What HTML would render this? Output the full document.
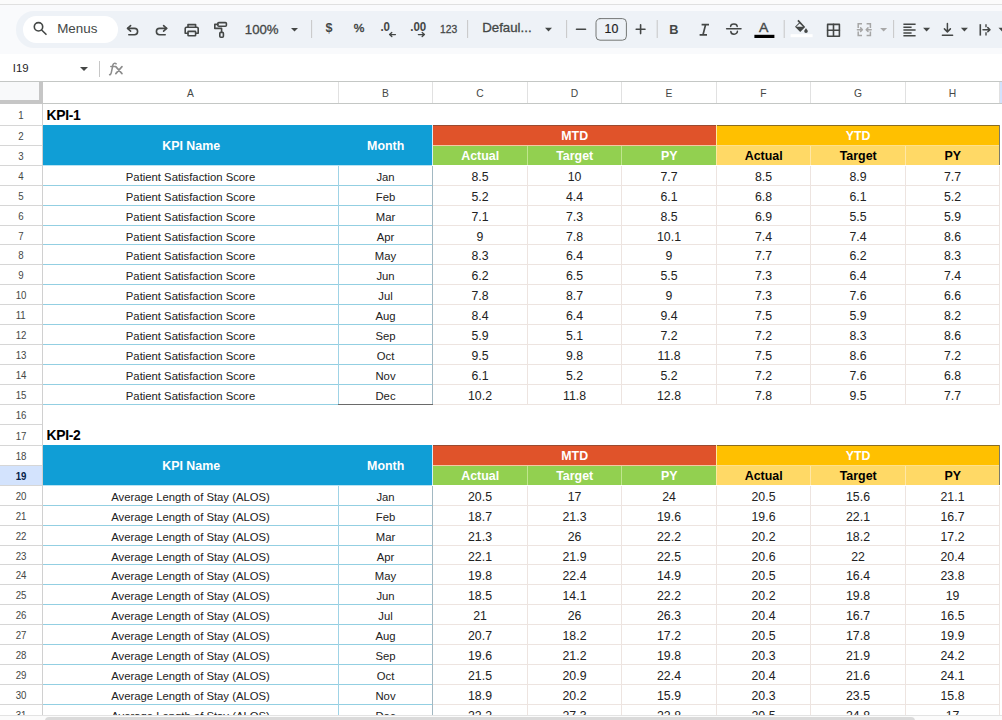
<!DOCTYPE html>
<html><head><meta charset="utf-8"><style>
html,body{margin:0;padding:0;width:1002px;height:720px;overflow:hidden;background:#fff;font-family:"Liberation Sans",sans-serif;}
#root{position:relative;width:1002px;height:720px;overflow:hidden}
#root div{position:absolute;box-sizing:border-box}
#root .t{white-space:nowrap;overflow:hidden;font-size:11.2px;color:#222}
</style></head><body><div id="root">
<div style="left:0;top:0;width:1002px;height:4px;background:#fbfbfb"></div>
<div style="left:0;top:4px;width:1002px;height:1px;background:#e0e0e0"></div>
<div style="left:0;top:5px;width:1002px;height:49px;background:#f9fafc"></div>
<div style="left:16px;top:11px;width:1040px;height:36.5px;background:#eef2f7;border-radius:18px"></div>
<div style="left:22.5px;top:16px;width:95px;height:26.5px;background:#fff;border-radius:13.25px"></div>
<svg style="position:absolute;left:0;top:0" width="1002" height="55" viewBox="0 0 1002 55">
<g fill="none" stroke="#444746" stroke-width="1.6" stroke-linecap="round" stroke-linejoin="round">
<circle cx="38.5" cy="26.8" r="4.2"/><path d="M41.9 30.3 L46 34.3"/>
<path d="M127.6 28.4 H134.4 A3.2 3.2 0 0 1 134.4 34.8 H128.8"/><path d="M130.6 25.6 L127.6 28.4 L130.6 31.2"/>
<path d="M166.6 28.4 H159.6 A3.2 3.2 0 0 0 159.6 34.8 H165.2"/><path d="M163.6 25.6 L166.6 28.4 L163.6 31.2"/>
<path d="M188 27 V24.6 H195.6 V27"/>
<path d="M187.8 33.2 H185.2 V28.6 A1.4 1.4 0 0 1 186.6 27.2 H196.8 A1.4 1.4 0 0 1 198.2 28.6 V33.2 H195.8"/>
<rect x="188" y="31.4" width="7.6" height="4.4" rx="0.6"/>
<rect x="217.8" y="22.6" width="8.6" height="3.6" rx="1"/>
<path d="M217.8 24.4 H214.8 V28.4 H221.6 V32.2"/>
<rect x="219.8" y="32.4" width="3.6" height="4.8" rx="1"/>
<path d="M395.4 34.6 H389.6 M391.8 32.6 L389.6 34.6 L391.8 36.6" stroke-width="1.4"/>
<path d="M418.4 34.6 H424.4 M422.2 32.6 L424.4 34.6 L422.2 36.6" stroke-width="1.4"/>
<path d="M576.5 29.2 H585.5"/>
<path d="M636.2 29.2 H645 M640.6 24.8 V33.6"/>
<rect x="596" y="18.6" width="30.4" height="21.6" rx="4" stroke="#747775" stroke-width="1"/>
<path d="M701.6 24.6 H709 M699.6 34.8 H707 M705.6 24.6 L703 34.8" stroke-width="1.7" stroke-linecap="butt"/>
<path d="M726.6 28.8 H741" stroke-width="1.5"/>
<path d="M730.6 26.6 A3.2 2.6 0 0 1 737.2 26.6" stroke-width="1.5"/>
<path d="M730.8 31.4 A3.2 2.8 0 0 0 737.4 31.2" stroke-width="1.5"/>
<rect x="827.6" y="24.4" width="11.8" height="11.8" stroke-width="1.6"/><path d="M833.5 24.4 V36.2 M827.6 30.3 H839.4" stroke-width="1.6"/>
<path d="M862 23.8 H858.2 V28 M858.2 31.4 V35.6 H862 M866.6 23.8 H870.4 V28 M870.4 31.4 V35.6 H866.6" stroke="#a6a6a6" stroke-width="1.5" stroke-linecap="butt" stroke-linejoin="miter"/>
<path d="M857.4 29.7 H862.4 M860.6 27.9 L862.4 29.7 L860.6 31.5 M871.2 29.7 H866.2 M868 27.9 L866.2 29.7 L868 31.5" stroke="#a6a6a6" stroke-width="1.5"/>
<path d="M903.4 24.2 H915.6 M903.4 27.2 H911.6 M903.4 30.1 H915.6 M903.4 32.9 H911.6 M903.4 35.8 H915.6" stroke-width="1.5" stroke-linecap="butt"/>
<path d="M947.4 23.4 V31.6 M944.4 28.9 L947.4 31.9 L950.4 28.9 M942.4 35.3 H952.6" stroke-width="1.5"/>
<path d="M980.3 24.2 V35.6" stroke-width="1.6" stroke-linecap="butt"/>
<path d="M986 24.2 V27.2 M986 32.2 V35.6" stroke-width="1.4" stroke-linecap="butt"/>
<path d="M983 29.7 H989.8 M987.8 27.6 L990 29.7 L987.8 31.8" stroke-width="1.5"/>
</g>
<g fill="#444746" stroke="none">
<path d="M798.6 19.8 L797.3 21.1 L799 22.8 L795 26.8 L800.2 32 L805.2 27 Z M799.6 23.4 L803 26.8 H796.2 Z" fill-rule="evenodd"/>
<path d="M806 28.2 C806 28.2 804.2 30.2 804.2 31.2 A1.8 1.8 0 0 0 807.8 31.2 C807.8 30.2 806 28.2 806 28.2 Z"/>
</g>
<rect x="790.6" y="34.2" width="22" height="3" fill="#ffffff"/>
<rect x="754.4" y="34.8" width="20" height="3.2" fill="#000"/>
<path d="M291.0 28.0 L298.0 28.0 L294.5 31.6 Z" fill="#444746" stroke="none"/>
<path d="M545.0 27.8 L552.0 27.8 L548.5 31.400000000000002 Z" fill="#444746" stroke="none"/>
<path d="M880.1 28.0 L887.1 28.0 L883.6 31.6 Z" fill="#a8a8a8" stroke="none"/>
<path d="M923.1 27.8 L930.1 27.8 L926.6 31.400000000000002 Z" fill="#444746" stroke="none"/>
<path d="M960.9 27.8 L967.9 27.8 L964.4 31.400000000000002 Z" fill="#444746" stroke="none"/>
<path d="M998.5 27.8 L1005.5 27.8 L1002 31.400000000000002 Z" fill="#444746" stroke="none"/>
<rect x="311.1" y="20" width="1" height="18" fill="#c7c7c7" stroke="none"/>
<rect x="467.1" y="20" width="1" height="18" fill="#c7c7c7" stroke="none"/>
<rect x="566.1" y="20" width="1" height="18" fill="#c7c7c7" stroke="none"/>
<rect x="656.7" y="20" width="1" height="18" fill="#c7c7c7" stroke="none"/>
<rect x="783.7" y="20" width="1" height="18" fill="#c7c7c7" stroke="none"/>
<rect x="893.1" y="20" width="1" height="18" fill="#c7c7c7" stroke="none"/>
<text x="57.2" y="33" font-family="Liberation Sans" font-size="12.8" font-weight="normal" fill="#444746" textLength="40.2" lengthAdjust="spacingAndGlyphs" >Menus</text>
<text x="244.8" y="34" font-family="Liberation Sans" font-size="12.8" font-weight="normal" fill="#444746" textLength="33.8" lengthAdjust="spacingAndGlyphs" stroke="#444746" stroke-width="0.3">100%</text>
<text x="325.6" y="32.4" font-family="Liberation Sans" font-size="13.4" font-weight="bold" fill="#444746" textLength="7" lengthAdjust="spacingAndGlyphs" >$</text>
<text x="353.8" y="32.2" font-family="Liberation Sans" font-size="11.8" font-weight="normal" fill="#444746" textLength="10.6" lengthAdjust="spacingAndGlyphs" stroke="#444746" stroke-width="0.45">%</text>
<text x="380.4" y="30.8" font-family="Liberation Sans" font-size="12" font-weight="bold" fill="#444746" textLength="9.6" lengthAdjust="spacingAndGlyphs" >.0</text>
<text x="410.2" y="30.8" font-family="Liberation Sans" font-size="12" font-weight="bold" fill="#444746" textLength="16" lengthAdjust="spacingAndGlyphs" >.00</text>
<text x="440" y="32.6" font-family="Liberation Sans" font-size="11.6" font-weight="normal" fill="#444746" textLength="17.2" lengthAdjust="spacingAndGlyphs" stroke="#444746" stroke-width="0.3">123</text>
<text x="482.2" y="32" font-family="Liberation Sans" font-size="12.6" font-weight="normal" fill="#444746" textLength="49.4" lengthAdjust="spacingAndGlyphs" stroke="#444746" stroke-width="0.3">Defaul...</text>
<text x="604.6" y="33.2" font-family="Liberation Sans" font-size="12.4" font-weight="normal" fill="#1f1f1f" textLength="13.8" lengthAdjust="spacingAndGlyphs" stroke="#1f1f1f" stroke-width="0.2">10</text>
<text x="669.2" y="34" font-family="Liberation Sans" font-size="13.4" font-weight="bold" fill="#444746" textLength="9.2" lengthAdjust="spacingAndGlyphs" >B</text>
<text x="759" y="32.2" font-family="Liberation Sans" font-size="12.6" font-weight="normal" fill="#444746" textLength="9.4" lengthAdjust="spacingAndGlyphs" stroke="#444746" stroke-width="0.35">A</text>
</svg>
<div style="left:0;top:54px;width:1002px;height:27px;background:#fff"></div>
<div class="t" style="left:12.8px;top:58px;height:20px;line-height:20px;font-size:11.4px;color:#1f1f1f">I19</div>
<div style="left:80px;top:66.5px;width:0;height:0;border-left:4.5px solid transparent;border-right:4.5px solid transparent;border-top:4.5px solid #444746"></div>
<div style="left:99px;top:61px;width:1px;height:16px;background:#c7c7c7"></div>
<svg style="position:absolute;left:0;top:55px" width="140" height="26" viewBox="0 55 140 26"><g fill="none" stroke="#8c8c8c" stroke-width="1.5" stroke-linecap="round"><path d="M116.2 63.8 C115 62.8 113.3 63.2 112.9 65 L111.3 72.6 C110.9 74.4 110 74.9 109.6 74.6"/><path d="M110.8 66.6 H115.4"/><path d="M115.8 66.6 L122 73.6 M122 66.6 L115.8 73.6" stroke-width="1.6"/></g></svg>
<div style="left:0;top:81px;width:1002px;height:1px;background:#c4c7c5"></div>
<div style="left:0;top:82px;width:1002px;height:21px;background:#fff"></div>
<div style="left:1000px;top:82px;width:2px;height:21px;background:#d3e3fd"></div>
<div class="t" style="left:43px;top:82px;width:295px;height:21px;line-height:21px;text-align:center;color:#444746;font-size:10.3px;padding-top:1px">A</div>
<div style="left:338px;top:82px;width:1px;height:21px;background:#e1e1e1"></div>
<div class="t" style="left:339px;top:82px;width:93px;height:21px;line-height:21px;text-align:center;color:#444746;font-size:10.3px;padding-top:1px">B</div>
<div style="left:432px;top:82px;width:1px;height:21px;background:#e1e1e1"></div>
<div class="t" style="left:433px;top:82px;width:94px;height:21px;line-height:21px;text-align:center;color:#444746;font-size:10.3px;padding-top:1px">C</div>
<div style="left:527px;top:82px;width:1px;height:21px;background:#e1e1e1"></div>
<div class="t" style="left:528px;top:82px;width:93px;height:21px;line-height:21px;text-align:center;color:#444746;font-size:10.3px;padding-top:1px">D</div>
<div style="left:621px;top:82px;width:1px;height:21px;background:#e1e1e1"></div>
<div class="t" style="left:622px;top:82px;width:94px;height:21px;line-height:21px;text-align:center;color:#444746;font-size:10.3px;padding-top:1px">E</div>
<div style="left:716px;top:82px;width:1px;height:21px;background:#e1e1e1"></div>
<div class="t" style="left:717px;top:82px;width:93px;height:21px;line-height:21px;text-align:center;color:#444746;font-size:10.3px;padding-top:1px">F</div>
<div style="left:810px;top:82px;width:1px;height:21px;background:#e1e1e1"></div>
<div class="t" style="left:811px;top:82px;width:94px;height:21px;line-height:21px;text-align:center;color:#444746;font-size:10.3px;padding-top:1px">G</div>
<div style="left:905px;top:82px;width:1px;height:21px;background:#e1e1e1"></div>
<div class="t" style="left:906px;top:82px;width:93px;height:21px;line-height:21px;text-align:center;color:#444746;font-size:10.3px;padding-top:1px">H</div>
<div style="left:999px;top:82px;width:1px;height:21px;background:#e1e1e1"></div>
<div style="left:0;top:103px;width:1002px;height:1px;background:#c4c7c5"></div>
<div style="left:0;top:82px;width:39px;height:18px;background:#f8f9fa"></div>
<div style="left:39px;top:82px;width:4px;height:22px;background:#c6c6c6"></div>
<div style="left:0;top:100px;width:42px;height:4px;background:#c6c6c6"></div>
<div class="t" style="left:46.5px;top:105px;height:21px;line-height:21px;font-size:13.9px;letter-spacing:-0.3px;font-weight:bold;color:#000">KPI-1</div>
<div style="left:43px;top:125px;width:389px;height:40px;background:#109ed6"></div>
<div class="t" style="left:43.7px;top:126.00px;width:295px;height:40px;line-height:40px;text-align:center;font-size:12.4px;font-weight:bold;color:#fff">KPI Name</div>
<div class="t" style="left:338.7px;top:126.00px;width:94px;height:40px;line-height:40px;text-align:center;font-size:12.4px;font-weight:bold;color:#fff">Month</div>
<div style="left:433px;top:125px;width:283px;height:20px;background:#e0532a"></div>
<div style="left:433px;top:125px;width:283px;height:1px;background:#9a4a30"></div>
<div style="left:717px;top:125px;width:283px;height:20px;background:#ffc000"></div>
<div style="left:717px;top:125px;width:283px;height:1px;background:#8a6d20"></div>
<div class="t" style="left:432.7px;top:126.00px;width:284px;height:20px;line-height:20px;text-align:center;font-size:12.4px;font-weight:bold;color:#fff">MTD</div>
<div class="t" style="left:716.7px;top:126.00px;width:283px;height:20px;line-height:20px;text-align:center;font-size:12.4px;font-weight:bold;color:#fff">YTD</div>
<div style="left:432px;top:125px;width:1px;height:40px;background:#d8eef8"></div>
<div style="left:716px;top:125px;width:1px;height:40px;background:#fbe9a0"></div>
<div style="left:433px;top:145px;width:283px;height:1px;background:#f4c7a4"></div>
<div style="left:717px;top:145px;width:283px;height:1px;background:#ffe08a"></div>
<div style="left:433px;top:146px;width:94px;height:19px;background:#92d050"></div>
<div class="t" style="left:432.7px;top:146.00px;width:95px;height:20px;line-height:20px;text-align:center;font-size:12.4px;font-weight:bold;color:#fff">Actual</div>
<div style="left:717px;top:146px;width:93px;height:19px;background:#ffd966"></div>
<div class="t" style="left:716.7px;top:146.00px;width:94px;height:20px;line-height:20px;text-align:center;font-size:12.4px;font-weight:bold;color:#000">Actual</div>
<div style="left:528px;top:146px;width:93px;height:19px;background:#92d050"></div>
<div class="t" style="left:527.7px;top:146.00px;width:94px;height:20px;line-height:20px;text-align:center;font-size:12.4px;font-weight:bold;color:#fff">Target</div>
<div style="left:811px;top:146px;width:94px;height:19px;background:#ffd966"></div>
<div class="t" style="left:810.7px;top:146.00px;width:95px;height:20px;line-height:20px;text-align:center;font-size:12.4px;font-weight:bold;color:#000">Target</div>
<div style="left:622px;top:146px;width:94px;height:19px;background:#92d050"></div>
<div class="t" style="left:621.7px;top:146.00px;width:95px;height:20px;line-height:20px;text-align:center;font-size:12.4px;font-weight:bold;color:#fff">PY</div>
<div style="left:906px;top:146px;width:94px;height:19px;background:#ffd966"></div>
<div class="t" style="left:905.7px;top:146.00px;width:94px;height:20px;line-height:20px;text-align:center;font-size:12.4px;font-weight:bold;color:#000">PY</div>
<div style="left:527px;top:146px;width:1px;height:19px;background:#c0e68e"></div>
<div style="left:621px;top:146px;width:1px;height:19px;background:#c0e68e"></div>
<div style="left:810px;top:146px;width:1px;height:19px;background:#ffe7a6"></div>
<div style="left:905px;top:146px;width:1px;height:19px;background:#ffe7a6"></div>
<div style="left:43px;top:185px;width:389px;height:1px;background:#93cfe2"></div>
<div style="left:433px;top:185px;width:567px;height:1px;background:#ede4e0"></div>
<div class="t" style="left:43px;top:167.60px;width:295px;height:19px;line-height:19px;text-align:center;font-size:11.3px">Patient Satisfaction Score</div>
<div class="t" style="left:339px;top:167.60px;width:93px;height:19px;line-height:19px;text-align:center;font-size:11.3px">Jan</div>
<div class="t" style="left:433px;top:168.00px;width:94px;height:19px;line-height:19px;text-align:center;font-size:12.3px">8.5</div>
<div class="t" style="left:528px;top:168.00px;width:93px;height:19px;line-height:19px;text-align:center;font-size:12.3px">10</div>
<div class="t" style="left:622px;top:168.00px;width:94px;height:19px;line-height:19px;text-align:center;font-size:12.3px">7.7</div>
<div class="t" style="left:717px;top:168.00px;width:93px;height:19px;line-height:19px;text-align:center;font-size:12.3px">8.5</div>
<div class="t" style="left:811px;top:168.00px;width:94px;height:19px;line-height:19px;text-align:center;font-size:12.3px">8.9</div>
<div class="t" style="left:906px;top:168.00px;width:93px;height:19px;line-height:19px;text-align:center;font-size:12.3px">7.7</div>
<div style="left:43px;top:205px;width:389px;height:1px;background:#93cfe2"></div>
<div style="left:433px;top:205px;width:567px;height:1px;background:#ede4e0"></div>
<div class="t" style="left:43px;top:187.60px;width:295px;height:19px;line-height:19px;text-align:center;font-size:11.3px">Patient Satisfaction Score</div>
<div class="t" style="left:339px;top:187.60px;width:93px;height:19px;line-height:19px;text-align:center;font-size:11.3px">Feb</div>
<div class="t" style="left:433px;top:188.00px;width:94px;height:19px;line-height:19px;text-align:center;font-size:12.3px">5.2</div>
<div class="t" style="left:528px;top:188.00px;width:93px;height:19px;line-height:19px;text-align:center;font-size:12.3px">4.4</div>
<div class="t" style="left:622px;top:188.00px;width:94px;height:19px;line-height:19px;text-align:center;font-size:12.3px">6.1</div>
<div class="t" style="left:717px;top:188.00px;width:93px;height:19px;line-height:19px;text-align:center;font-size:12.3px">6.8</div>
<div class="t" style="left:811px;top:188.00px;width:94px;height:19px;line-height:19px;text-align:center;font-size:12.3px">6.1</div>
<div class="t" style="left:906px;top:188.00px;width:93px;height:19px;line-height:19px;text-align:center;font-size:12.3px">5.2</div>
<div style="left:43px;top:225px;width:389px;height:1px;background:#93cfe2"></div>
<div style="left:433px;top:225px;width:567px;height:1px;background:#ede4e0"></div>
<div class="t" style="left:43px;top:207.60px;width:295px;height:19px;line-height:19px;text-align:center;font-size:11.3px">Patient Satisfaction Score</div>
<div class="t" style="left:339px;top:207.60px;width:93px;height:19px;line-height:19px;text-align:center;font-size:11.3px">Mar</div>
<div class="t" style="left:433px;top:208.00px;width:94px;height:19px;line-height:19px;text-align:center;font-size:12.3px">7.1</div>
<div class="t" style="left:528px;top:208.00px;width:93px;height:19px;line-height:19px;text-align:center;font-size:12.3px">7.3</div>
<div class="t" style="left:622px;top:208.00px;width:94px;height:19px;line-height:19px;text-align:center;font-size:12.3px">8.5</div>
<div class="t" style="left:717px;top:208.00px;width:93px;height:19px;line-height:19px;text-align:center;font-size:12.3px">6.9</div>
<div class="t" style="left:811px;top:208.00px;width:94px;height:19px;line-height:19px;text-align:center;font-size:12.3px">5.5</div>
<div class="t" style="left:906px;top:208.00px;width:93px;height:19px;line-height:19px;text-align:center;font-size:12.3px">5.9</div>
<div style="left:43px;top:244px;width:389px;height:1px;background:#93cfe2"></div>
<div style="left:433px;top:244px;width:567px;height:1px;background:#ede4e0"></div>
<div class="t" style="left:43px;top:227.60px;width:295px;height:18px;line-height:18px;text-align:center;font-size:11.3px">Patient Satisfaction Score</div>
<div class="t" style="left:339px;top:227.60px;width:93px;height:18px;line-height:18px;text-align:center;font-size:11.3px">Apr</div>
<div class="t" style="left:433px;top:228.00px;width:94px;height:18px;line-height:18px;text-align:center;font-size:12.3px">9</div>
<div class="t" style="left:528px;top:228.00px;width:93px;height:18px;line-height:18px;text-align:center;font-size:12.3px">7.8</div>
<div class="t" style="left:622px;top:228.00px;width:94px;height:18px;line-height:18px;text-align:center;font-size:12.3px">10.1</div>
<div class="t" style="left:717px;top:228.00px;width:93px;height:18px;line-height:18px;text-align:center;font-size:12.3px">7.4</div>
<div class="t" style="left:811px;top:228.00px;width:94px;height:18px;line-height:18px;text-align:center;font-size:12.3px">7.4</div>
<div class="t" style="left:906px;top:228.00px;width:93px;height:18px;line-height:18px;text-align:center;font-size:12.3px">8.6</div>
<div style="left:43px;top:264px;width:389px;height:1px;background:#93cfe2"></div>
<div style="left:433px;top:264px;width:567px;height:1px;background:#ede4e0"></div>
<div class="t" style="left:43px;top:246.60px;width:295px;height:19px;line-height:19px;text-align:center;font-size:11.3px">Patient Satisfaction Score</div>
<div class="t" style="left:339px;top:246.60px;width:93px;height:19px;line-height:19px;text-align:center;font-size:11.3px">May</div>
<div class="t" style="left:433px;top:247.00px;width:94px;height:19px;line-height:19px;text-align:center;font-size:12.3px">8.3</div>
<div class="t" style="left:528px;top:247.00px;width:93px;height:19px;line-height:19px;text-align:center;font-size:12.3px">6.4</div>
<div class="t" style="left:622px;top:247.00px;width:94px;height:19px;line-height:19px;text-align:center;font-size:12.3px">9</div>
<div class="t" style="left:717px;top:247.00px;width:93px;height:19px;line-height:19px;text-align:center;font-size:12.3px">7.7</div>
<div class="t" style="left:811px;top:247.00px;width:94px;height:19px;line-height:19px;text-align:center;font-size:12.3px">6.2</div>
<div class="t" style="left:906px;top:247.00px;width:93px;height:19px;line-height:19px;text-align:center;font-size:12.3px">8.3</div>
<div style="left:43px;top:284px;width:389px;height:1px;background:#93cfe2"></div>
<div style="left:433px;top:284px;width:567px;height:1px;background:#ede4e0"></div>
<div class="t" style="left:43px;top:266.60px;width:295px;height:19px;line-height:19px;text-align:center;font-size:11.3px">Patient Satisfaction Score</div>
<div class="t" style="left:339px;top:266.60px;width:93px;height:19px;line-height:19px;text-align:center;font-size:11.3px">Jun</div>
<div class="t" style="left:433px;top:267.00px;width:94px;height:19px;line-height:19px;text-align:center;font-size:12.3px">6.2</div>
<div class="t" style="left:528px;top:267.00px;width:93px;height:19px;line-height:19px;text-align:center;font-size:12.3px">6.5</div>
<div class="t" style="left:622px;top:267.00px;width:94px;height:19px;line-height:19px;text-align:center;font-size:12.3px">5.5</div>
<div class="t" style="left:717px;top:267.00px;width:93px;height:19px;line-height:19px;text-align:center;font-size:12.3px">7.3</div>
<div class="t" style="left:811px;top:267.00px;width:94px;height:19px;line-height:19px;text-align:center;font-size:12.3px">6.4</div>
<div class="t" style="left:906px;top:267.00px;width:93px;height:19px;line-height:19px;text-align:center;font-size:12.3px">7.4</div>
<div style="left:43px;top:304px;width:389px;height:1px;background:#93cfe2"></div>
<div style="left:433px;top:304px;width:567px;height:1px;background:#ede4e0"></div>
<div class="t" style="left:43px;top:286.60px;width:295px;height:19px;line-height:19px;text-align:center;font-size:11.3px">Patient Satisfaction Score</div>
<div class="t" style="left:339px;top:286.60px;width:93px;height:19px;line-height:19px;text-align:center;font-size:11.3px">Jul</div>
<div class="t" style="left:433px;top:287.00px;width:94px;height:19px;line-height:19px;text-align:center;font-size:12.3px">7.8</div>
<div class="t" style="left:528px;top:287.00px;width:93px;height:19px;line-height:19px;text-align:center;font-size:12.3px">8.7</div>
<div class="t" style="left:622px;top:287.00px;width:94px;height:19px;line-height:19px;text-align:center;font-size:12.3px">9</div>
<div class="t" style="left:717px;top:287.00px;width:93px;height:19px;line-height:19px;text-align:center;font-size:12.3px">7.3</div>
<div class="t" style="left:811px;top:287.00px;width:94px;height:19px;line-height:19px;text-align:center;font-size:12.3px">7.6</div>
<div class="t" style="left:906px;top:287.00px;width:93px;height:19px;line-height:19px;text-align:center;font-size:12.3px">6.6</div>
<div style="left:43px;top:324px;width:389px;height:1px;background:#93cfe2"></div>
<div style="left:433px;top:324px;width:567px;height:1px;background:#ede4e0"></div>
<div class="t" style="left:43px;top:306.60px;width:295px;height:19px;line-height:19px;text-align:center;font-size:11.3px">Patient Satisfaction Score</div>
<div class="t" style="left:339px;top:306.60px;width:93px;height:19px;line-height:19px;text-align:center;font-size:11.3px">Aug</div>
<div class="t" style="left:433px;top:307.00px;width:94px;height:19px;line-height:19px;text-align:center;font-size:12.3px">8.4</div>
<div class="t" style="left:528px;top:307.00px;width:93px;height:19px;line-height:19px;text-align:center;font-size:12.3px">6.4</div>
<div class="t" style="left:622px;top:307.00px;width:94px;height:19px;line-height:19px;text-align:center;font-size:12.3px">9.4</div>
<div class="t" style="left:717px;top:307.00px;width:93px;height:19px;line-height:19px;text-align:center;font-size:12.3px">7.5</div>
<div class="t" style="left:811px;top:307.00px;width:94px;height:19px;line-height:19px;text-align:center;font-size:12.3px">5.9</div>
<div class="t" style="left:906px;top:307.00px;width:93px;height:19px;line-height:19px;text-align:center;font-size:12.3px">8.2</div>
<div style="left:43px;top:344px;width:389px;height:1px;background:#93cfe2"></div>
<div style="left:433px;top:344px;width:567px;height:1px;background:#ede4e0"></div>
<div class="t" style="left:43px;top:326.60px;width:295px;height:19px;line-height:19px;text-align:center;font-size:11.3px">Patient Satisfaction Score</div>
<div class="t" style="left:339px;top:326.60px;width:93px;height:19px;line-height:19px;text-align:center;font-size:11.3px">Sep</div>
<div class="t" style="left:433px;top:327.00px;width:94px;height:19px;line-height:19px;text-align:center;font-size:12.3px">5.9</div>
<div class="t" style="left:528px;top:327.00px;width:93px;height:19px;line-height:19px;text-align:center;font-size:12.3px">5.1</div>
<div class="t" style="left:622px;top:327.00px;width:94px;height:19px;line-height:19px;text-align:center;font-size:12.3px">7.2</div>
<div class="t" style="left:717px;top:327.00px;width:93px;height:19px;line-height:19px;text-align:center;font-size:12.3px">7.2</div>
<div class="t" style="left:811px;top:327.00px;width:94px;height:19px;line-height:19px;text-align:center;font-size:12.3px">8.3</div>
<div class="t" style="left:906px;top:327.00px;width:93px;height:19px;line-height:19px;text-align:center;font-size:12.3px">8.6</div>
<div style="left:43px;top:364px;width:389px;height:1px;background:#93cfe2"></div>
<div style="left:433px;top:364px;width:567px;height:1px;background:#ede4e0"></div>
<div class="t" style="left:43px;top:346.60px;width:295px;height:19px;line-height:19px;text-align:center;font-size:11.3px">Patient Satisfaction Score</div>
<div class="t" style="left:339px;top:346.60px;width:93px;height:19px;line-height:19px;text-align:center;font-size:11.3px">Oct</div>
<div class="t" style="left:433px;top:347.00px;width:94px;height:19px;line-height:19px;text-align:center;font-size:12.3px">9.5</div>
<div class="t" style="left:528px;top:347.00px;width:93px;height:19px;line-height:19px;text-align:center;font-size:12.3px">9.8</div>
<div class="t" style="left:622px;top:347.00px;width:94px;height:19px;line-height:19px;text-align:center;font-size:12.3px">11.8</div>
<div class="t" style="left:717px;top:347.00px;width:93px;height:19px;line-height:19px;text-align:center;font-size:12.3px">7.5</div>
<div class="t" style="left:811px;top:347.00px;width:94px;height:19px;line-height:19px;text-align:center;font-size:12.3px">8.6</div>
<div class="t" style="left:906px;top:347.00px;width:93px;height:19px;line-height:19px;text-align:center;font-size:12.3px">7.2</div>
<div style="left:43px;top:384px;width:389px;height:1px;background:#93cfe2"></div>
<div style="left:433px;top:384px;width:567px;height:1px;background:#ede4e0"></div>
<div class="t" style="left:43px;top:366.60px;width:295px;height:19px;line-height:19px;text-align:center;font-size:11.3px">Patient Satisfaction Score</div>
<div class="t" style="left:339px;top:366.60px;width:93px;height:19px;line-height:19px;text-align:center;font-size:11.3px">Nov</div>
<div class="t" style="left:433px;top:367.00px;width:94px;height:19px;line-height:19px;text-align:center;font-size:12.3px">6.1</div>
<div class="t" style="left:528px;top:367.00px;width:93px;height:19px;line-height:19px;text-align:center;font-size:12.3px">5.2</div>
<div class="t" style="left:622px;top:367.00px;width:94px;height:19px;line-height:19px;text-align:center;font-size:12.3px">5.2</div>
<div class="t" style="left:717px;top:367.00px;width:93px;height:19px;line-height:19px;text-align:center;font-size:12.3px">7.2</div>
<div class="t" style="left:811px;top:367.00px;width:94px;height:19px;line-height:19px;text-align:center;font-size:12.3px">7.6</div>
<div class="t" style="left:906px;top:367.00px;width:93px;height:19px;line-height:19px;text-align:center;font-size:12.3px">6.8</div>
<div style="left:43px;top:404px;width:389px;height:1px;background:#93cfe2"></div>
<div style="left:433px;top:404px;width:567px;height:1px;background:#ede4e0"></div>
<div class="t" style="left:43px;top:386.60px;width:295px;height:19px;line-height:19px;text-align:center;font-size:11.3px">Patient Satisfaction Score</div>
<div class="t" style="left:339px;top:386.60px;width:93px;height:19px;line-height:19px;text-align:center;font-size:11.3px">Dec</div>
<div class="t" style="left:433px;top:387.00px;width:94px;height:19px;line-height:19px;text-align:center;font-size:12.3px">10.2</div>
<div class="t" style="left:528px;top:387.00px;width:93px;height:19px;line-height:19px;text-align:center;font-size:12.3px">11.8</div>
<div class="t" style="left:622px;top:387.00px;width:94px;height:19px;line-height:19px;text-align:center;font-size:12.3px">12.8</div>
<div class="t" style="left:717px;top:387.00px;width:93px;height:19px;line-height:19px;text-align:center;font-size:12.3px">7.8</div>
<div class="t" style="left:811px;top:387.00px;width:94px;height:19px;line-height:19px;text-align:center;font-size:12.3px">9.5</div>
<div class="t" style="left:906px;top:387.00px;width:93px;height:19px;line-height:19px;text-align:center;font-size:12.3px">7.7</div>
<div style="left:43px;top:165px;width:389px;height:1px;background:#b9e3f2"></div>
<div style="left:338px;top:166px;width:1px;height:239px;background:#9fd3e6"></div>
<div style="left:432px;top:166px;width:1px;height:239px;background:#a2b8c2"></div>
<div style="left:527px;top:166px;width:1px;height:239px;background:#ede4e0"></div>
<div style="left:621px;top:166px;width:1px;height:239px;background:#ede4e0"></div>
<div style="left:716px;top:166px;width:1px;height:239px;background:#ede4e0"></div>
<div style="left:810px;top:166px;width:1px;height:239px;background:#ede4e0"></div>
<div style="left:905px;top:166px;width:1px;height:239px;background:#ede4e0"></div>
<div style="left:999px;top:166px;width:1px;height:239px;background:#ede4e0"></div>
<div style="left:999px;top:125px;width:1px;height:40px;background:#7a7a6a"></div>
<div style="left:338px;top:404px;width:95px;height:1px;background:#6a6a6a"></div>
<div class="t" style="left:46.5px;top:425.4px;height:20px;line-height:20px;font-size:13.9px;letter-spacing:-0.3px;font-weight:bold;color:#000">KPI-2</div>
<div style="left:43px;top:445px;width:389px;height:40px;background:#109ed6"></div>
<div class="t" style="left:43.7px;top:446.00px;width:295px;height:40px;line-height:40px;text-align:center;font-size:12.4px;font-weight:bold;color:#fff">KPI Name</div>
<div class="t" style="left:338.7px;top:446.00px;width:94px;height:40px;line-height:40px;text-align:center;font-size:12.4px;font-weight:bold;color:#fff">Month</div>
<div style="left:433px;top:445px;width:283px;height:20px;background:#e0532a"></div>
<div style="left:433px;top:445px;width:283px;height:1px;background:#9a4a30"></div>
<div style="left:717px;top:445px;width:283px;height:20px;background:#ffc000"></div>
<div style="left:717px;top:445px;width:283px;height:1px;background:#8a6d20"></div>
<div class="t" style="left:432.7px;top:446.00px;width:284px;height:20px;line-height:20px;text-align:center;font-size:12.4px;font-weight:bold;color:#fff">MTD</div>
<div class="t" style="left:716.7px;top:446.00px;width:283px;height:20px;line-height:20px;text-align:center;font-size:12.4px;font-weight:bold;color:#fff">YTD</div>
<div style="left:432px;top:445px;width:1px;height:40px;background:#d8eef8"></div>
<div style="left:716px;top:445px;width:1px;height:40px;background:#fbe9a0"></div>
<div style="left:433px;top:465px;width:283px;height:1px;background:#f4c7a4"></div>
<div style="left:717px;top:465px;width:283px;height:1px;background:#ffe08a"></div>
<div style="left:433px;top:466px;width:94px;height:19px;background:#92d050"></div>
<div class="t" style="left:432.7px;top:466.00px;width:95px;height:20px;line-height:20px;text-align:center;font-size:12.4px;font-weight:bold;color:#fff">Actual</div>
<div style="left:717px;top:466px;width:93px;height:19px;background:#ffd966"></div>
<div class="t" style="left:716.7px;top:466.00px;width:94px;height:20px;line-height:20px;text-align:center;font-size:12.4px;font-weight:bold;color:#000">Actual</div>
<div style="left:528px;top:466px;width:93px;height:19px;background:#92d050"></div>
<div class="t" style="left:527.7px;top:466.00px;width:94px;height:20px;line-height:20px;text-align:center;font-size:12.4px;font-weight:bold;color:#fff">Target</div>
<div style="left:811px;top:466px;width:94px;height:19px;background:#ffd966"></div>
<div class="t" style="left:810.7px;top:466.00px;width:95px;height:20px;line-height:20px;text-align:center;font-size:12.4px;font-weight:bold;color:#000">Target</div>
<div style="left:622px;top:466px;width:94px;height:19px;background:#92d050"></div>
<div class="t" style="left:621.7px;top:466.00px;width:95px;height:20px;line-height:20px;text-align:center;font-size:12.4px;font-weight:bold;color:#fff">PY</div>
<div style="left:906px;top:466px;width:94px;height:19px;background:#ffd966"></div>
<div class="t" style="left:905.7px;top:466.00px;width:94px;height:20px;line-height:20px;text-align:center;font-size:12.4px;font-weight:bold;color:#000">PY</div>
<div style="left:527px;top:466px;width:1px;height:19px;background:#c0e68e"></div>
<div style="left:621px;top:466px;width:1px;height:19px;background:#c0e68e"></div>
<div style="left:810px;top:466px;width:1px;height:19px;background:#ffe7a6"></div>
<div style="left:905px;top:466px;width:1px;height:19px;background:#ffe7a6"></div>
<div style="left:43px;top:505px;width:389px;height:1px;background:#93cfe2"></div>
<div style="left:433px;top:505px;width:567px;height:1px;background:#ede4e0"></div>
<div class="t" style="left:43px;top:487.60px;width:295px;height:19px;line-height:19px;text-align:center;font-size:11.3px">Average Length of Stay (ALOS)</div>
<div class="t" style="left:339px;top:487.60px;width:93px;height:19px;line-height:19px;text-align:center;font-size:11.3px">Jan</div>
<div class="t" style="left:433px;top:488.00px;width:94px;height:19px;line-height:19px;text-align:center;font-size:12.3px">20.5</div>
<div class="t" style="left:528px;top:488.00px;width:93px;height:19px;line-height:19px;text-align:center;font-size:12.3px">17</div>
<div class="t" style="left:622px;top:488.00px;width:94px;height:19px;line-height:19px;text-align:center;font-size:12.3px">24</div>
<div class="t" style="left:717px;top:488.00px;width:93px;height:19px;line-height:19px;text-align:center;font-size:12.3px">20.5</div>
<div class="t" style="left:811px;top:488.00px;width:94px;height:19px;line-height:19px;text-align:center;font-size:12.3px">15.6</div>
<div class="t" style="left:906px;top:488.00px;width:93px;height:19px;line-height:19px;text-align:center;font-size:12.3px">21.1</div>
<div style="left:43px;top:525px;width:389px;height:1px;background:#93cfe2"></div>
<div style="left:433px;top:525px;width:567px;height:1px;background:#ede4e0"></div>
<div class="t" style="left:43px;top:507.60px;width:295px;height:19px;line-height:19px;text-align:center;font-size:11.3px">Average Length of Stay (ALOS)</div>
<div class="t" style="left:339px;top:507.60px;width:93px;height:19px;line-height:19px;text-align:center;font-size:11.3px">Feb</div>
<div class="t" style="left:433px;top:508.00px;width:94px;height:19px;line-height:19px;text-align:center;font-size:12.3px">18.7</div>
<div class="t" style="left:528px;top:508.00px;width:93px;height:19px;line-height:19px;text-align:center;font-size:12.3px">21.3</div>
<div class="t" style="left:622px;top:508.00px;width:94px;height:19px;line-height:19px;text-align:center;font-size:12.3px">19.6</div>
<div class="t" style="left:717px;top:508.00px;width:93px;height:19px;line-height:19px;text-align:center;font-size:12.3px">19.6</div>
<div class="t" style="left:811px;top:508.00px;width:94px;height:19px;line-height:19px;text-align:center;font-size:12.3px">22.1</div>
<div class="t" style="left:906px;top:508.00px;width:93px;height:19px;line-height:19px;text-align:center;font-size:12.3px">16.7</div>
<div style="left:43px;top:545px;width:389px;height:1px;background:#93cfe2"></div>
<div style="left:433px;top:545px;width:567px;height:1px;background:#ede4e0"></div>
<div class="t" style="left:43px;top:527.60px;width:295px;height:19px;line-height:19px;text-align:center;font-size:11.3px">Average Length of Stay (ALOS)</div>
<div class="t" style="left:339px;top:527.60px;width:93px;height:19px;line-height:19px;text-align:center;font-size:11.3px">Mar</div>
<div class="t" style="left:433px;top:528.00px;width:94px;height:19px;line-height:19px;text-align:center;font-size:12.3px">21.3</div>
<div class="t" style="left:528px;top:528.00px;width:93px;height:19px;line-height:19px;text-align:center;font-size:12.3px">26</div>
<div class="t" style="left:622px;top:528.00px;width:94px;height:19px;line-height:19px;text-align:center;font-size:12.3px">22.2</div>
<div class="t" style="left:717px;top:528.00px;width:93px;height:19px;line-height:19px;text-align:center;font-size:12.3px">20.2</div>
<div class="t" style="left:811px;top:528.00px;width:94px;height:19px;line-height:19px;text-align:center;font-size:12.3px">18.2</div>
<div class="t" style="left:906px;top:528.00px;width:93px;height:19px;line-height:19px;text-align:center;font-size:12.3px">17.2</div>
<div style="left:43px;top:564px;width:389px;height:1px;background:#93cfe2"></div>
<div style="left:433px;top:564px;width:567px;height:1px;background:#ede4e0"></div>
<div class="t" style="left:43px;top:547.60px;width:295px;height:18px;line-height:18px;text-align:center;font-size:11.3px">Average Length of Stay (ALOS)</div>
<div class="t" style="left:339px;top:547.60px;width:93px;height:18px;line-height:18px;text-align:center;font-size:11.3px">Apr</div>
<div class="t" style="left:433px;top:548.00px;width:94px;height:18px;line-height:18px;text-align:center;font-size:12.3px">22.1</div>
<div class="t" style="left:528px;top:548.00px;width:93px;height:18px;line-height:18px;text-align:center;font-size:12.3px">21.9</div>
<div class="t" style="left:622px;top:548.00px;width:94px;height:18px;line-height:18px;text-align:center;font-size:12.3px">22.5</div>
<div class="t" style="left:717px;top:548.00px;width:93px;height:18px;line-height:18px;text-align:center;font-size:12.3px">20.6</div>
<div class="t" style="left:811px;top:548.00px;width:94px;height:18px;line-height:18px;text-align:center;font-size:12.3px">22</div>
<div class="t" style="left:906px;top:548.00px;width:93px;height:18px;line-height:18px;text-align:center;font-size:12.3px">20.4</div>
<div style="left:43px;top:584px;width:389px;height:1px;background:#93cfe2"></div>
<div style="left:433px;top:584px;width:567px;height:1px;background:#ede4e0"></div>
<div class="t" style="left:43px;top:566.60px;width:295px;height:19px;line-height:19px;text-align:center;font-size:11.3px">Average Length of Stay (ALOS)</div>
<div class="t" style="left:339px;top:566.60px;width:93px;height:19px;line-height:19px;text-align:center;font-size:11.3px">May</div>
<div class="t" style="left:433px;top:567.00px;width:94px;height:19px;line-height:19px;text-align:center;font-size:12.3px">19.8</div>
<div class="t" style="left:528px;top:567.00px;width:93px;height:19px;line-height:19px;text-align:center;font-size:12.3px">22.4</div>
<div class="t" style="left:622px;top:567.00px;width:94px;height:19px;line-height:19px;text-align:center;font-size:12.3px">14.9</div>
<div class="t" style="left:717px;top:567.00px;width:93px;height:19px;line-height:19px;text-align:center;font-size:12.3px">20.5</div>
<div class="t" style="left:811px;top:567.00px;width:94px;height:19px;line-height:19px;text-align:center;font-size:12.3px">16.4</div>
<div class="t" style="left:906px;top:567.00px;width:93px;height:19px;line-height:19px;text-align:center;font-size:12.3px">23.8</div>
<div style="left:43px;top:604px;width:389px;height:1px;background:#93cfe2"></div>
<div style="left:433px;top:604px;width:567px;height:1px;background:#ede4e0"></div>
<div class="t" style="left:43px;top:586.60px;width:295px;height:19px;line-height:19px;text-align:center;font-size:11.3px">Average Length of Stay (ALOS)</div>
<div class="t" style="left:339px;top:586.60px;width:93px;height:19px;line-height:19px;text-align:center;font-size:11.3px">Jun</div>
<div class="t" style="left:433px;top:587.00px;width:94px;height:19px;line-height:19px;text-align:center;font-size:12.3px">18.5</div>
<div class="t" style="left:528px;top:587.00px;width:93px;height:19px;line-height:19px;text-align:center;font-size:12.3px">14.1</div>
<div class="t" style="left:622px;top:587.00px;width:94px;height:19px;line-height:19px;text-align:center;font-size:12.3px">22.2</div>
<div class="t" style="left:717px;top:587.00px;width:93px;height:19px;line-height:19px;text-align:center;font-size:12.3px">20.2</div>
<div class="t" style="left:811px;top:587.00px;width:94px;height:19px;line-height:19px;text-align:center;font-size:12.3px">19.8</div>
<div class="t" style="left:906px;top:587.00px;width:93px;height:19px;line-height:19px;text-align:center;font-size:12.3px">19</div>
<div style="left:43px;top:624px;width:389px;height:1px;background:#93cfe2"></div>
<div style="left:433px;top:624px;width:567px;height:1px;background:#ede4e0"></div>
<div class="t" style="left:43px;top:606.60px;width:295px;height:19px;line-height:19px;text-align:center;font-size:11.3px">Average Length of Stay (ALOS)</div>
<div class="t" style="left:339px;top:606.60px;width:93px;height:19px;line-height:19px;text-align:center;font-size:11.3px">Jul</div>
<div class="t" style="left:433px;top:607.00px;width:94px;height:19px;line-height:19px;text-align:center;font-size:12.3px">21</div>
<div class="t" style="left:528px;top:607.00px;width:93px;height:19px;line-height:19px;text-align:center;font-size:12.3px">26</div>
<div class="t" style="left:622px;top:607.00px;width:94px;height:19px;line-height:19px;text-align:center;font-size:12.3px">26.3</div>
<div class="t" style="left:717px;top:607.00px;width:93px;height:19px;line-height:19px;text-align:center;font-size:12.3px">20.4</div>
<div class="t" style="left:811px;top:607.00px;width:94px;height:19px;line-height:19px;text-align:center;font-size:12.3px">16.7</div>
<div class="t" style="left:906px;top:607.00px;width:93px;height:19px;line-height:19px;text-align:center;font-size:12.3px">16.5</div>
<div style="left:43px;top:644px;width:389px;height:1px;background:#93cfe2"></div>
<div style="left:433px;top:644px;width:567px;height:1px;background:#ede4e0"></div>
<div class="t" style="left:43px;top:626.60px;width:295px;height:19px;line-height:19px;text-align:center;font-size:11.3px">Average Length of Stay (ALOS)</div>
<div class="t" style="left:339px;top:626.60px;width:93px;height:19px;line-height:19px;text-align:center;font-size:11.3px">Aug</div>
<div class="t" style="left:433px;top:627.00px;width:94px;height:19px;line-height:19px;text-align:center;font-size:12.3px">20.7</div>
<div class="t" style="left:528px;top:627.00px;width:93px;height:19px;line-height:19px;text-align:center;font-size:12.3px">18.2</div>
<div class="t" style="left:622px;top:627.00px;width:94px;height:19px;line-height:19px;text-align:center;font-size:12.3px">17.2</div>
<div class="t" style="left:717px;top:627.00px;width:93px;height:19px;line-height:19px;text-align:center;font-size:12.3px">20.5</div>
<div class="t" style="left:811px;top:627.00px;width:94px;height:19px;line-height:19px;text-align:center;font-size:12.3px">17.8</div>
<div class="t" style="left:906px;top:627.00px;width:93px;height:19px;line-height:19px;text-align:center;font-size:12.3px">19.9</div>
<div style="left:43px;top:664px;width:389px;height:1px;background:#93cfe2"></div>
<div style="left:433px;top:664px;width:567px;height:1px;background:#ede4e0"></div>
<div class="t" style="left:43px;top:646.60px;width:295px;height:19px;line-height:19px;text-align:center;font-size:11.3px">Average Length of Stay (ALOS)</div>
<div class="t" style="left:339px;top:646.60px;width:93px;height:19px;line-height:19px;text-align:center;font-size:11.3px">Sep</div>
<div class="t" style="left:433px;top:647.00px;width:94px;height:19px;line-height:19px;text-align:center;font-size:12.3px">19.6</div>
<div class="t" style="left:528px;top:647.00px;width:93px;height:19px;line-height:19px;text-align:center;font-size:12.3px">21.2</div>
<div class="t" style="left:622px;top:647.00px;width:94px;height:19px;line-height:19px;text-align:center;font-size:12.3px">19.8</div>
<div class="t" style="left:717px;top:647.00px;width:93px;height:19px;line-height:19px;text-align:center;font-size:12.3px">20.3</div>
<div class="t" style="left:811px;top:647.00px;width:94px;height:19px;line-height:19px;text-align:center;font-size:12.3px">21.9</div>
<div class="t" style="left:906px;top:647.00px;width:93px;height:19px;line-height:19px;text-align:center;font-size:12.3px">24.2</div>
<div style="left:43px;top:684px;width:389px;height:1px;background:#93cfe2"></div>
<div style="left:433px;top:684px;width:567px;height:1px;background:#ede4e0"></div>
<div class="t" style="left:43px;top:666.60px;width:295px;height:19px;line-height:19px;text-align:center;font-size:11.3px">Average Length of Stay (ALOS)</div>
<div class="t" style="left:339px;top:666.60px;width:93px;height:19px;line-height:19px;text-align:center;font-size:11.3px">Oct</div>
<div class="t" style="left:433px;top:667.00px;width:94px;height:19px;line-height:19px;text-align:center;font-size:12.3px">21.5</div>
<div class="t" style="left:528px;top:667.00px;width:93px;height:19px;line-height:19px;text-align:center;font-size:12.3px">20.9</div>
<div class="t" style="left:622px;top:667.00px;width:94px;height:19px;line-height:19px;text-align:center;font-size:12.3px">22.4</div>
<div class="t" style="left:717px;top:667.00px;width:93px;height:19px;line-height:19px;text-align:center;font-size:12.3px">20.4</div>
<div class="t" style="left:811px;top:667.00px;width:94px;height:19px;line-height:19px;text-align:center;font-size:12.3px">21.6</div>
<div class="t" style="left:906px;top:667.00px;width:93px;height:19px;line-height:19px;text-align:center;font-size:12.3px">24.1</div>
<div style="left:43px;top:704px;width:389px;height:1px;background:#93cfe2"></div>
<div style="left:433px;top:704px;width:567px;height:1px;background:#ede4e0"></div>
<div class="t" style="left:43px;top:686.60px;width:295px;height:19px;line-height:19px;text-align:center;font-size:11.3px">Average Length of Stay (ALOS)</div>
<div class="t" style="left:339px;top:686.60px;width:93px;height:19px;line-height:19px;text-align:center;font-size:11.3px">Nov</div>
<div class="t" style="left:433px;top:687.00px;width:94px;height:19px;line-height:19px;text-align:center;font-size:12.3px">18.9</div>
<div class="t" style="left:528px;top:687.00px;width:93px;height:19px;line-height:19px;text-align:center;font-size:12.3px">20.2</div>
<div class="t" style="left:622px;top:687.00px;width:94px;height:19px;line-height:19px;text-align:center;font-size:12.3px">15.9</div>
<div class="t" style="left:717px;top:687.00px;width:93px;height:19px;line-height:19px;text-align:center;font-size:12.3px">20.3</div>
<div class="t" style="left:811px;top:687.00px;width:94px;height:19px;line-height:19px;text-align:center;font-size:12.3px">23.5</div>
<div class="t" style="left:906px;top:687.00px;width:93px;height:19px;line-height:19px;text-align:center;font-size:12.3px">15.8</div>
<div style="left:43px;top:724px;width:389px;height:1px;background:#93cfe2"></div>
<div style="left:433px;top:724px;width:567px;height:1px;background:#ede4e0"></div>
<div class="t" style="left:43px;top:706.60px;width:295px;height:19px;line-height:19px;text-align:center;font-size:11.3px">Average Length of Stay (ALOS)</div>
<div class="t" style="left:339px;top:706.60px;width:93px;height:19px;line-height:19px;text-align:center;font-size:11.3px">Dec</div>
<div class="t" style="left:433px;top:707.00px;width:94px;height:19px;line-height:19px;text-align:center;font-size:12.3px">22.2</div>
<div class="t" style="left:528px;top:707.00px;width:93px;height:19px;line-height:19px;text-align:center;font-size:12.3px">27.3</div>
<div class="t" style="left:622px;top:707.00px;width:94px;height:19px;line-height:19px;text-align:center;font-size:12.3px">22.8</div>
<div class="t" style="left:717px;top:707.00px;width:93px;height:19px;line-height:19px;text-align:center;font-size:12.3px">20.5</div>
<div class="t" style="left:811px;top:707.00px;width:94px;height:19px;line-height:19px;text-align:center;font-size:12.3px">24.8</div>
<div class="t" style="left:906px;top:707.00px;width:93px;height:19px;line-height:19px;text-align:center;font-size:12.3px">17</div>
<div style="left:43px;top:485px;width:389px;height:1px;background:#b9e3f2"></div>
<div style="left:338px;top:486px;width:1px;height:239px;background:#9fd3e6"></div>
<div style="left:432px;top:486px;width:1px;height:239px;background:#a2b8c2"></div>
<div style="left:527px;top:486px;width:1px;height:239px;background:#ede4e0"></div>
<div style="left:621px;top:486px;width:1px;height:239px;background:#ede4e0"></div>
<div style="left:716px;top:486px;width:1px;height:239px;background:#ede4e0"></div>
<div style="left:810px;top:486px;width:1px;height:239px;background:#ede4e0"></div>
<div style="left:905px;top:486px;width:1px;height:239px;background:#ede4e0"></div>
<div style="left:999px;top:486px;width:1px;height:239px;background:#ede4e0"></div>
<div style="left:999px;top:445px;width:1px;height:40px;background:#7a7a6a"></div>
<div class="t" style="left:0;top:104px;width:42px;height:21px;line-height:21px;padding-top:0.5px;text-align:center;background:#ffffff;color:#444746;font-weight:normal;font-size:11px"><span style="display:inline-block;transform:scaleX(0.88)">1</span></div>
<div style="left:0;top:125px;width:42px;height:1px;background:#d6d6d6"></div>
<div class="t" style="left:0;top:126px;width:42px;height:19px;line-height:19px;padding-top:0.5px;text-align:center;background:#ffffff;color:#444746;font-weight:normal;font-size:11px"><span style="display:inline-block;transform:scaleX(0.88)">2</span></div>
<div style="left:0;top:145px;width:42px;height:1px;background:#d6d6d6"></div>
<div class="t" style="left:0;top:146px;width:42px;height:19px;line-height:19px;padding-top:0.5px;text-align:center;background:#ffffff;color:#444746;font-weight:normal;font-size:11px"><span style="display:inline-block;transform:scaleX(0.88)">3</span></div>
<div style="left:0;top:165px;width:42px;height:1px;background:#d6d6d6"></div>
<div class="t" style="left:0;top:166px;width:42px;height:19px;line-height:19px;padding-top:0.5px;text-align:center;background:#ffffff;color:#444746;font-weight:normal;font-size:11px"><span style="display:inline-block;transform:scaleX(0.88)">4</span></div>
<div style="left:0;top:185px;width:42px;height:1px;background:#d6d6d6"></div>
<div class="t" style="left:0;top:186px;width:42px;height:19px;line-height:19px;padding-top:0.5px;text-align:center;background:#ffffff;color:#444746;font-weight:normal;font-size:11px"><span style="display:inline-block;transform:scaleX(0.88)">5</span></div>
<div style="left:0;top:205px;width:42px;height:1px;background:#d6d6d6"></div>
<div class="t" style="left:0;top:206px;width:42px;height:19px;line-height:19px;padding-top:0.5px;text-align:center;background:#ffffff;color:#444746;font-weight:normal;font-size:11px"><span style="display:inline-block;transform:scaleX(0.88)">6</span></div>
<div style="left:0;top:225px;width:42px;height:1px;background:#d6d6d6"></div>
<div class="t" style="left:0;top:226px;width:42px;height:18px;line-height:18px;padding-top:0.5px;text-align:center;background:#ffffff;color:#444746;font-weight:normal;font-size:11px"><span style="display:inline-block;transform:scaleX(0.88)">7</span></div>
<div style="left:0;top:244px;width:42px;height:1px;background:#d6d6d6"></div>
<div class="t" style="left:0;top:245px;width:42px;height:19px;line-height:19px;padding-top:0.5px;text-align:center;background:#ffffff;color:#444746;font-weight:normal;font-size:11px"><span style="display:inline-block;transform:scaleX(0.88)">8</span></div>
<div style="left:0;top:264px;width:42px;height:1px;background:#d6d6d6"></div>
<div class="t" style="left:0;top:265px;width:42px;height:19px;line-height:19px;padding-top:0.5px;text-align:center;background:#ffffff;color:#444746;font-weight:normal;font-size:11px"><span style="display:inline-block;transform:scaleX(0.88)">9</span></div>
<div style="left:0;top:284px;width:42px;height:1px;background:#d6d6d6"></div>
<div class="t" style="left:0;top:285px;width:42px;height:19px;line-height:19px;padding-top:0.5px;text-align:center;background:#ffffff;color:#444746;font-weight:normal;font-size:11px"><span style="display:inline-block;transform:scaleX(0.88)">10</span></div>
<div style="left:0;top:304px;width:42px;height:1px;background:#d6d6d6"></div>
<div class="t" style="left:0;top:305px;width:42px;height:19px;line-height:19px;padding-top:0.5px;text-align:center;background:#ffffff;color:#444746;font-weight:normal;font-size:11px"><span style="display:inline-block;transform:scaleX(0.88)">11</span></div>
<div style="left:0;top:324px;width:42px;height:1px;background:#d6d6d6"></div>
<div class="t" style="left:0;top:325px;width:42px;height:19px;line-height:19px;padding-top:0.5px;text-align:center;background:#ffffff;color:#444746;font-weight:normal;font-size:11px"><span style="display:inline-block;transform:scaleX(0.88)">12</span></div>
<div style="left:0;top:344px;width:42px;height:1px;background:#d6d6d6"></div>
<div class="t" style="left:0;top:345px;width:42px;height:19px;line-height:19px;padding-top:0.5px;text-align:center;background:#ffffff;color:#444746;font-weight:normal;font-size:11px"><span style="display:inline-block;transform:scaleX(0.88)">13</span></div>
<div style="left:0;top:364px;width:42px;height:1px;background:#d6d6d6"></div>
<div class="t" style="left:0;top:365px;width:42px;height:19px;line-height:19px;padding-top:0.5px;text-align:center;background:#ffffff;color:#444746;font-weight:normal;font-size:11px"><span style="display:inline-block;transform:scaleX(0.88)">14</span></div>
<div style="left:0;top:384px;width:42px;height:1px;background:#d6d6d6"></div>
<div class="t" style="left:0;top:385px;width:42px;height:19px;line-height:19px;padding-top:0.5px;text-align:center;background:#ffffff;color:#444746;font-weight:normal;font-size:11px"><span style="display:inline-block;transform:scaleX(0.88)">15</span></div>
<div style="left:0;top:404px;width:42px;height:1px;background:#d6d6d6"></div>
<div class="t" style="left:0;top:405px;width:42px;height:19px;line-height:19px;padding-top:0.5px;text-align:center;background:#ffffff;color:#444746;font-weight:normal;font-size:11px"><span style="display:inline-block;transform:scaleX(0.88)">16</span></div>
<div style="left:0;top:424px;width:42px;height:1px;background:#d6d6d6"></div>
<div class="t" style="left:0;top:425px;width:42px;height:20px;line-height:20px;padding-top:0.5px;text-align:center;background:#ffffff;color:#444746;font-weight:normal;font-size:11px"><span style="display:inline-block;transform:scaleX(0.88)">17</span></div>
<div style="left:0;top:445px;width:42px;height:1px;background:#d6d6d6"></div>
<div class="t" style="left:0;top:446px;width:42px;height:19px;line-height:19px;padding-top:0.5px;text-align:center;background:#ffffff;color:#444746;font-weight:normal;font-size:11px"><span style="display:inline-block;transform:scaleX(0.88)">18</span></div>
<div style="left:0;top:465px;width:42px;height:1px;background:#d6d6d6"></div>
<div class="t" style="left:0;top:466px;width:42px;height:19px;line-height:19px;padding-top:0.5px;text-align:center;background:#d3e3fd;color:#041e49;font-weight:bold;font-size:11px"><span style="display:inline-block;transform:scaleX(0.88)">19</span></div>
<div style="left:0;top:485px;width:42px;height:1px;background:#d6d6d6"></div>
<div class="t" style="left:0;top:486px;width:42px;height:19px;line-height:19px;padding-top:0.5px;text-align:center;background:#ffffff;color:#444746;font-weight:normal;font-size:11px"><span style="display:inline-block;transform:scaleX(0.88)">20</span></div>
<div style="left:0;top:505px;width:42px;height:1px;background:#d6d6d6"></div>
<div class="t" style="left:0;top:506px;width:42px;height:19px;line-height:19px;padding-top:0.5px;text-align:center;background:#ffffff;color:#444746;font-weight:normal;font-size:11px"><span style="display:inline-block;transform:scaleX(0.88)">21</span></div>
<div style="left:0;top:525px;width:42px;height:1px;background:#d6d6d6"></div>
<div class="t" style="left:0;top:526px;width:42px;height:19px;line-height:19px;padding-top:0.5px;text-align:center;background:#ffffff;color:#444746;font-weight:normal;font-size:11px"><span style="display:inline-block;transform:scaleX(0.88)">22</span></div>
<div style="left:0;top:545px;width:42px;height:1px;background:#d6d6d6"></div>
<div class="t" style="left:0;top:546px;width:42px;height:18px;line-height:18px;padding-top:0.5px;text-align:center;background:#ffffff;color:#444746;font-weight:normal;font-size:11px"><span style="display:inline-block;transform:scaleX(0.88)">23</span></div>
<div style="left:0;top:564px;width:42px;height:1px;background:#d6d6d6"></div>
<div class="t" style="left:0;top:565px;width:42px;height:19px;line-height:19px;padding-top:0.5px;text-align:center;background:#ffffff;color:#444746;font-weight:normal;font-size:11px"><span style="display:inline-block;transform:scaleX(0.88)">24</span></div>
<div style="left:0;top:584px;width:42px;height:1px;background:#d6d6d6"></div>
<div class="t" style="left:0;top:585px;width:42px;height:19px;line-height:19px;padding-top:0.5px;text-align:center;background:#ffffff;color:#444746;font-weight:normal;font-size:11px"><span style="display:inline-block;transform:scaleX(0.88)">25</span></div>
<div style="left:0;top:604px;width:42px;height:1px;background:#d6d6d6"></div>
<div class="t" style="left:0;top:605px;width:42px;height:19px;line-height:19px;padding-top:0.5px;text-align:center;background:#ffffff;color:#444746;font-weight:normal;font-size:11px"><span style="display:inline-block;transform:scaleX(0.88)">26</span></div>
<div style="left:0;top:624px;width:42px;height:1px;background:#d6d6d6"></div>
<div class="t" style="left:0;top:625px;width:42px;height:19px;line-height:19px;padding-top:0.5px;text-align:center;background:#ffffff;color:#444746;font-weight:normal;font-size:11px"><span style="display:inline-block;transform:scaleX(0.88)">27</span></div>
<div style="left:0;top:644px;width:42px;height:1px;background:#d6d6d6"></div>
<div class="t" style="left:0;top:645px;width:42px;height:19px;line-height:19px;padding-top:0.5px;text-align:center;background:#ffffff;color:#444746;font-weight:normal;font-size:11px"><span style="display:inline-block;transform:scaleX(0.88)">28</span></div>
<div style="left:0;top:664px;width:42px;height:1px;background:#d6d6d6"></div>
<div class="t" style="left:0;top:665px;width:42px;height:19px;line-height:19px;padding-top:0.5px;text-align:center;background:#ffffff;color:#444746;font-weight:normal;font-size:11px"><span style="display:inline-block;transform:scaleX(0.88)">29</span></div>
<div style="left:0;top:684px;width:42px;height:1px;background:#d6d6d6"></div>
<div class="t" style="left:0;top:685px;width:42px;height:19px;line-height:19px;padding-top:0.5px;text-align:center;background:#ffffff;color:#444746;font-weight:normal;font-size:11px"><span style="display:inline-block;transform:scaleX(0.88)">30</span></div>
<div style="left:0;top:704px;width:42px;height:1px;background:#d6d6d6"></div>
<div class="t" style="left:0;top:705px;width:42px;height:19px;line-height:19px;padding-top:0.5px;text-align:center;background:#ffffff;color:#444746;font-weight:normal;font-size:11px"><span style="display:inline-block;transform:scaleX(0.88)">31</span></div>
<div style="left:0;top:724px;width:42px;height:1px;background:#d6d6d6"></div>
<div class="t" style="left:0;top:725px;width:42px;height:19px;line-height:19px;padding-top:0.5px;text-align:center;background:#ffffff;color:#444746;font-weight:normal;font-size:11px"><span style="display:inline-block;transform:scaleX(0.88)">32</span></div>
<div style="left:0;top:744px;width:42px;height:1px;background:#d6d6d6"></div>
<div style="left:42px;top:104px;width:1px;height:616px;background:#d0d0d0"></div>
<div style="left:0;top:715px;width:1002px;height:1px;background:#e3e3e3"></div>
<div style="left:0;top:716px;width:1002px;height:4px;background:#fbfbfb"></div>
<div style="left:45px;top:717px;width:870px;height:8px;background:#dadada;border-radius:4px"></div>
</div></body></html>
